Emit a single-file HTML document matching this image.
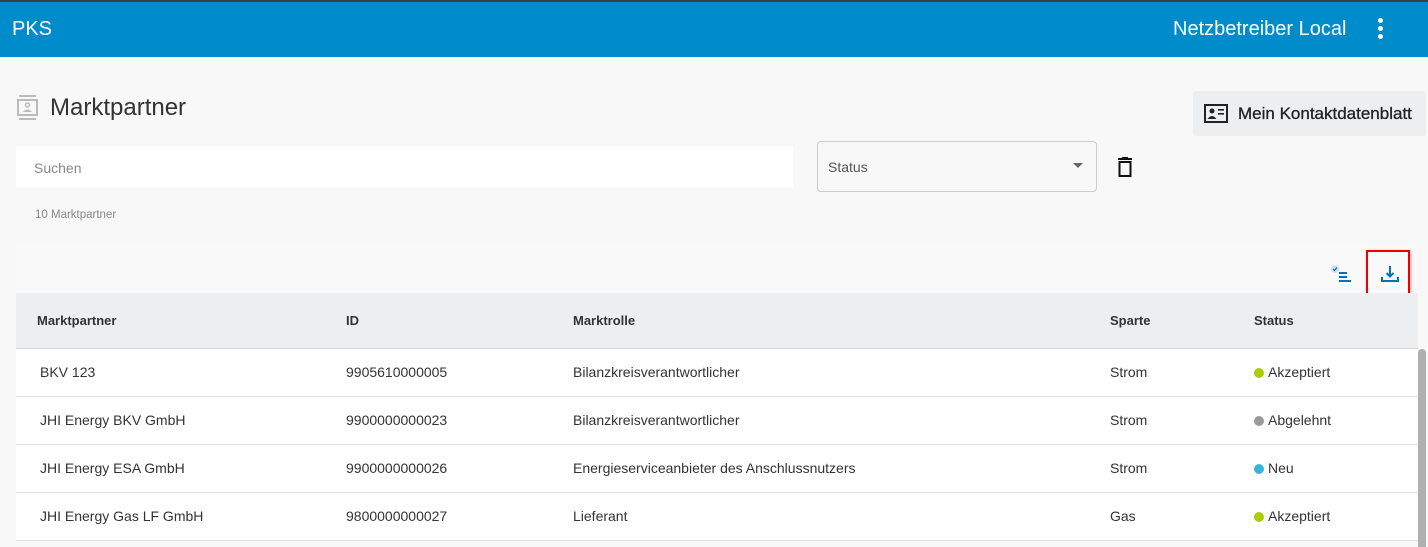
<!DOCTYPE html>
<html><head><meta charset="utf-8"><style>
*{box-sizing:border-box;margin:0;padding:0}
body{width:1428px;height:547px;overflow:hidden;background:#f8f8f8;font-family:"Liberation Sans",sans-serif;position:relative;color:#333}
.top{position:absolute;left:0;top:0;width:1428px;height:57px;background:#008ccb;border-top:2px solid #3a3f44;color:#fff}
.a{position:absolute}
table{border-collapse:collapse;position:absolute;left:16px;top:293px;width:1402px;font-size:14px}
th{background:#edeef0;height:55px;text-align:left;font-weight:bold;font-size:13px;color:#333;border-bottom:1px solid #d6d6d6}
td{background:#fff;height:48px;border-bottom:1px solid #e0e0e0;color:#333}
.d{display:inline-block;width:10px;height:10px;border-radius:50%;margin-right:4px;vertical-align:-1px}
</style></head><body>
<div class="top">
<div class="a" style="left:12px;top:16px;font-size:20px">PKS</div>
<div class="a" style="left:1173px;top:16px;font-size:20px">Netzbetreiber Local</div>
<div class="a" style="left:1378px;top:16px;width:6px">
<div style="width:5px;height:5px;border-radius:50%;background:#fff;margin-bottom:3px"></div>
<div style="width:5px;height:5px;border-radius:50%;background:#fff;margin-bottom:3px"></div>
<div style="width:5px;height:5px;border-radius:50%;background:#fff"></div></div>
</div>
<svg class="a" style="left:17px;top:95px" width="22" height="26" viewBox="0 0 22 26"><rect x="2" y="0" width="17" height="2" fill="#bbb"/><rect x="1" y="5" width="19" height="15" fill="none" stroke="#bbb" stroke-width="2"/><circle cx="10.5" cy="10" r="2" fill="none" stroke="#bbb" stroke-width="1.5"/><path d="M6 17q4.5-5 9 0z" fill="#bbb"/><rect x="2" y="23" width="17" height="2" fill="#bbb"/></svg>
<div class="a" style="left:50px;top:94px;font-size:24px;color:#333">Marktpartner</div>
<div class="a" style="left:1193px;top:91px;width:233px;height:45px;background:#edeef0;border-radius:3px"></div>
<svg class="a" style="left:1204px;top:104px" width="24" height="19" viewBox="0 0 24 19"><rect x="1" y="1" width="22" height="17" fill="none" stroke="#222" stroke-width="2"/><circle cx="8" cy="7" r="2.5" fill="#222"/><path d="M3.5 15q4.5-6 9 0z" fill="#222"/><rect x="14" y="5" width="6" height="1.6" fill="#222"/><rect x="14" y="9" width="6" height="1.6" fill="#222"/></svg>
<div class="a" style="left:1238px;top:104px;font-size:17px;color:#222;-webkit-text-stroke:0.3px #222">Mein Kontaktdatenblatt</div>
<div class="a" style="left:16px;top:146px;width:777px;height:41px;background:#fff"></div>
<div class="a" style="left:34px;top:160px;font-size:14px;color:#888">Suchen</div>
<div class="a" style="left:817px;top:141px;width:280px;height:51px;border:1px solid #ccc;border-radius:4px;background:#f8f8f8"></div>
<div class="a" style="left:828px;top:159px;font-size:14px;color:#555">Status</div>
<div class="a" style="left:1073px;top:163px;width:0;height:0;border-left:5px solid transparent;border-right:5px solid transparent;border-top:5px solid #666"></div>
<svg class="a" style="left:1117px;top:157px" width="16" height="20" viewBox="0 0 16 20"><rect x="1" y="1" width="14" height="2" fill="#111"/><rect x="5" y="0" width="6" height="2" fill="#111"/><rect x="2.5" y="5" width="11" height="14" fill="none" stroke="#111" stroke-width="2"/></svg>
<div class="a" style="left:35px;top:209px;font-size:11.5px;color:#888">10 Marktpartner</div>
<div class="a" style="left:16px;top:245px;width:1402px;height:48px;background:#f9f9f9"></div>
<svg class="a" style="left:1331px;top:265px" width="22" height="20" viewBox="0 0 22 20"><circle cx="4" cy="4" r="4" fill="#cfe0ee"/><path d="M2 4l1.5 1.5L6 2.5" stroke="#0072bc" stroke-width="1.2" fill="none"/><rect x="8" y="7" width="8" height="2" fill="#0072bc"/><rect x="8" y="11" width="8" height="2" fill="#0072bc"/><rect x="8" y="15" width="12" height="2" fill="#0072bc"/></svg>
<div class="a" style="left:1366px;top:250px;width:44px;height:49px;border:2px solid #e00;box-shadow:1px 1px 3px rgba(0,0,0,.3)"></div>
<svg class="a" style="left:1380px;top:264px" width="20" height="20" viewBox="0 0 20 20"><path d="M10 2v10M6.5 9l3.5 3.5L13.5 9" stroke="#0072bc" stroke-width="2" fill="none"/><path d="M2 13v4h16v-4" stroke="#0072bc" stroke-width="2" fill="none"/></svg>
<table>
<tr><th style="padding-left:21px;width:330px">Marktpartner</th><th style="width:227px">ID</th><th style="width:537px">Marktrolle</th><th style="width:144px">Sparte</th><th>Status</th></tr>
<tr><td style="padding-left:24px">BKV 123</td><td>9905610000005</td><td>Bilanzkreisverantwortlicher</td><td>Strom</td><td><span class="d" style="background:#afca0b"></span>Akzeptiert</td></tr>
<tr><td style="padding-left:24px">JHI Energy BKV GmbH</td><td>9900000000023</td><td>Bilanzkreisverantwortlicher</td><td>Strom</td><td><span class="d" style="background:#999"></span>Abgelehnt</td></tr>
<tr><td style="padding-left:24px">JHI Energy ESA GmbH</td><td>9900000000026</td><td>Energieserviceanbieter des Anschlussnutzers</td><td>Strom</td><td><span class="d" style="background:#3cb4d9"></span>Neu</td></tr>
<tr><td style="padding-left:24px">JHI Energy Gas LF GmbH</td><td>9800000000027</td><td>Lieferant</td><td>Gas</td><td><span class="d" style="background:#afca0b"></span>Akzeptiert</td></tr>
</table>
<div class="a" style="left:1418px;top:349px;width:8px;height:198px;background:#b0b0b0;border-radius:4px 4px 0 0"></div>
</body></html>
